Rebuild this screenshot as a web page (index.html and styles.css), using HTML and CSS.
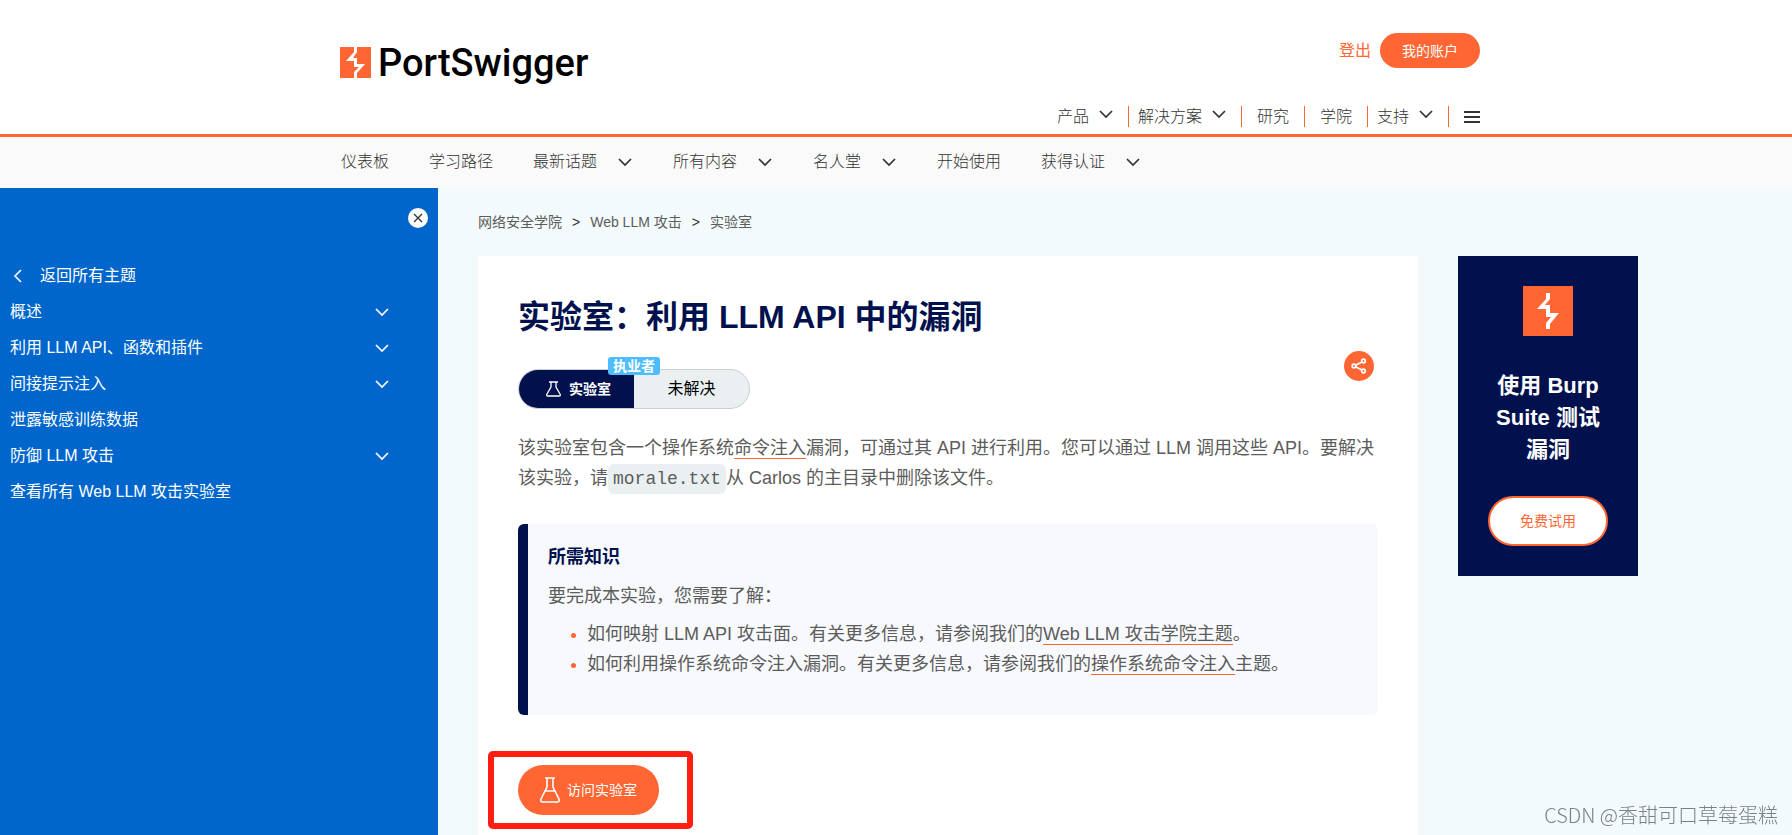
FILE: index.html
```html
<!DOCTYPE html>
<html lang="zh-CN">
<head>
    <meta charset="UTF-8">
    <meta name="viewport" content="width=device-width, initial-scale=1.0">
    <title>实验室：利用 LLM API 中的漏洞</title>
    <link rel="stylesheet" href="styles.css">
</head>
<body>
    <!-- shared icons -->
    <svg class="sprite" width="0" height="0">
        <symbol id="chevron" viewBox="0 0 16 16">
            <path d="M2 5l6 6 6-6" fill="none" stroke="currentColor" stroke-width="1.7"/>
        </symbol>
        <symbol id="flask" viewBox="0 0 20 26">
            <path d="M5 1h10M7 1v9L1 22q-1 3 2 3h14q3 0 2-3L13 10V1M5 14h10" fill="none" stroke="currentColor" stroke-width="1.6"/>
        </symbol>
        <symbol id="flask-wide" viewBox="0 0 15 16">
            <path d="M3 1h9M5 1v5L1 13q-1 2 1 2h11q2 0 1-2L10 6V1" fill="none" stroke="currentColor" stroke-width="1.3"/>
        </symbol>
    </svg>

    <header class="header">
        <div class="wrap header-inner">
            <a class="logo" href="#">
                <svg class="logo-mark" viewBox="0 0 31 31">
                    <rect width="31" height="31" fill="#ff6633"/>
                    <path d="M14 0h3v5l-4 6h4v6h8l-8 9v5h-3v-6l5-5h-5v-6H6l8-9z" fill="#fff"/>
                </svg>
                <span>PortSwigger</span>
            </a>
            <div class="header-right">
                <div class="account">
                    <a class="logout" href="#">登出</a>
                    <a class="btn btn-account" href="#">我的账户</a>
                </div>
                <nav class="main-nav">
                    <a href="#">产品 <svg class="icon"><use href="#chevron"/></svg></a>
                    <a href="#">解决方案 <svg class="icon"><use href="#chevron"/></svg></a>
                    <a class="plain" href="#">研究</a>
                    <a class="plain" href="#">学院</a>
                    <a href="#">支持 <svg class="icon"><use href="#chevron"/></svg></a>
                    <button class="burger" aria-label="菜单"><span></span><span></span><span></span></button>
                </nav>
            </div>
        </div>
    </header>

    <nav class="sub-nav">
        <div class="wrap sub-nav-inner">
            <a href="#">仪表板</a>
            <a href="#">学习路径</a>
            <a href="#">最新话题 <svg class="icon"><use href="#chevron"/></svg></a>
            <a href="#">所有内容 <svg class="icon"><use href="#chevron"/></svg></a>
            <a href="#">名人堂 <svg class="icon"><use href="#chevron"/></svg></a>
            <a href="#">开始使用</a>
            <a href="#">获得认证 <svg class="icon"><use href="#chevron"/></svg></a>
        </div>
    </nav>

    <div class="page">
        <aside class="sidebar">
            <button class="close" aria-label="关闭">
                <svg viewBox="0 0 20 20"><path d="M6 6l8 8M14 6l-8 8" stroke="#333332" stroke-width="1.3"/></svg>
            </button>
            <a class="back" href="#"><svg class="icon"><use href="#chevron"/></svg> 返回所有主题</a>
            <ul class="topics">
                <li><a href="#">概述</a><svg class="icon"><use href="#chevron"/></svg></li>
                <li><a href="#">利用 LLM API、函数和插件</a><svg class="icon"><use href="#chevron"/></svg></li>
                <li><a href="#">间接提示注入</a><svg class="icon"><use href="#chevron"/></svg></li>
                <li><a href="#">泄露敏感训练数据</a></li>
                <li><a href="#">防御 LLM 攻击</a><svg class="icon"><use href="#chevron"/></svg></li>
                <li><a href="#">查看所有 Web LLM 攻击实验室</a></li>
            </ul>
        </aside>

        <main class="main">
            <div class="breadcrumb">
                <a href="#">网络安全学院</a>
                <span>&gt;</span>
                <a href="#">Web LLM 攻击</a>
                <span>&gt;</span>
                <a href="#">实验室</a>
            </div>

            <div class="columns">
                <article class="card">
                    <h1>实验室：利用 LLM API 中的漏洞</h1>

                    <div class="lab-row">
                        <div class="status">
                            <span class="status-lab"><svg class="flask-small"><use href="#flask-wide"/></svg>实验室</span>
                            <span class="status-state">未解决</span>
                            <span class="level">执业者</span>
                        </div>
                        <button class="share" aria-label="分享">
                            <svg viewBox="0 0 30 30" fill="none" stroke="#fff" stroke-width="1.7">
                                <path d="M18 11l-6 3M12 16l6 3"/>
                                <circle cx="19.5" cy="10" r="1.8"/>
                                <circle cx="10" cy="15" r="1.8"/>
                                <circle cx="19.5" cy="20" r="1.8"/>
                            </svg>
                        </button>
                    </div>

                    <p class="intro">该实验室包含一个操作系统<a href="#">命令注入</a>漏洞，可通过其 API 进行利用。您可以通过 LLM 调用这些 API。要解决该实验，请<code>morale.txt</code>从 Carlos 的主目录中删除该文件。</p>

                    <section class="knowledge">
                        <h2>所需知识</h2>
                        <p>要完成本实验，您需要了解：</p>
                        <ul>
                            <li>如何映射 LLM API 攻击面。有关更多信息，请参阅我们的<a href="#">Web LLM 攻击学院主题</a>。</li>
                            <li>如何利用操作系统命令注入漏洞。有关更多信息，请参阅我们的<a href="#">操作系统命令注入</a>主题。</li>
                        </ul>
                    </section>

                    <div class="launch">
                        <a class="btn btn-launch" href="#"><svg class="flask-big"><use href="#flask"/></svg>访问实验室</a>
                    </div>
                </article>

                <aside class="promo">
                    <svg class="promo-mark" viewBox="0 0 50 50">
                        <rect width="50" height="50" fill="#ff6633"/>
                        <path d="M23 7h4v6l-5 6h5v8h9l-9 11v5h-4v-6l5-6h-5v-8h-9l9-10z" fill="#fff"/>
                    </svg>
                    <p>使用 Burp Suite 测试漏洞</p>
                    <a class="btn btn-trial" href="#">免费试用</a>
                </aside>
            </div>
        </main>
    </div>

    <div class="watermark">CSDN @香甜可口草莓蛋糕</div>
</body>
</html>
```
FILE: styles.css
```css
* {
    box-sizing: border-box;
}
body {
    margin: 0;
    font-family: "Liberation Sans", "Noto Sans CJK SC", sans-serif;
    font-size: 16px;
    line-height: 24px;
    color: #333332;
    background: #f2fafc;
    overflow-x: hidden;
}
a {
    color: inherit;
    text-decoration: none;
}
button {
    border: 0;
    padding: 0;
    cursor: pointer;
}
ul {
    list-style: none;
    margin: 0;
    padding: 0;
}
svg {
    flex: none;
}
.sprite {
    position: absolute;
}
.icon {
    width: 16px;
    height: 16px;
}
.wrap {
    max-width: 1168px;
    margin: 0 auto;
    padding-left: 28px;
}
.btn {
    display: flex;
    align-items: center;
    justify-content: center;
    font-size: 14px;
    color: #fff;
    background: #ff6633;
    border-radius: 25px;
}

/* header */
.header {
    background: #fff;
    border-bottom: 3px solid #ff6633;
}
.header-inner {
    display: flex;
    justify-content: space-between;
    height: 134px;
}
.logo {
    display: flex;
    align-items: center;
    gap: 7px;
    height: 125px;
    font-family: Roboto, sans-serif;
    font-size: 38px;
    font-weight: 500;
    color: #000;
}
.logo-mark {
    width: 31px;
    height: 31px;
}
.header-right {
    display: flex;
    flex-direction: column;
    justify-content: space-between;
    padding: 33px 0 7px;
}
.account {
    display: flex;
    align-items: center;
    justify-content: flex-end;
    gap: 9px;
}
.logout {
    color: #ff6633;
}
.btn-account {
    width: 100px;
    height: 35px;
}
.main-nav {
    display: flex;
    align-items: center;
}
.main-nav, .sub-nav {
    font-weight: 300;
}
.main-nav a {
    display: flex;
    align-items: center;
    gap: 9px;
    height: 21px;
    padding: 0 14px 0 9px;
    border-right: 1px solid #ff6633;
}
.main-nav .icon {
    margin-bottom: 6px;
}
.main-nav .plain {
    padding: 0 15px;
}
.burger {
    display: flex;
    flex-direction: column;
    gap: 3px;
    width: 16px;
    margin-left: 15px;
    background: none;
}
.burger span {
    width: 16px;
    height: 2px;
    background: #333332;
}
.sub-nav {
    background: #fafafa;
}
.sub-nav-inner {
    display: flex;
    align-items: center;
    gap: 40px;
    height: 51px;
    padding: 0 0 2px 29px;
}
.sub-nav a {
    display: flex;
    align-items: center;
    gap: 20px;
}

/* sidebar */
.page {
    display: flex;
    height: calc(100vh - 188px);
    overflow: hidden;
}
.sidebar {
    flex: none;
    width: 438px;
    padding: 20px 10px;
    color: #fff;
    background: #0066cc;
}
.close {
    display: block;
    width: 20px;
    height: 20px;
    margin-left: auto;
    border-radius: 50%;
    background: #fff;
}
.close svg {
    display: block;
}
.back {
    display: flex;
    align-items: center;
    gap: 14px;
    height: 36px;
    margin-top: 30px;
}
.back .icon {
    transform: rotate(90deg);
}
.topics li {
    display: flex;
    align-items: center;
    justify-content: space-between;
    height: 36px;
    padding-right: 38px;
}

/* content */
.main {
    flex: 1;
    padding: 22px 40px 0;
}
.breadcrumb {
    display: flex;
    gap: 10px;
    font-size: 14px;
    color: #5c5c5b;
}
.breadcrumb span {
    color: #333332;
}
.columns {
    display: grid;
    grid-template-columns: minmax(0, 940px) 180px;
    gap: 40px;
    align-items: start;
    margin-top: 22px;
}
.card {
    padding: 40px 40px 20px;
    background: #fff;
}
h1 {
    margin: 0;
    font-size: 32px;
    line-height: 42px;
    color: #00114e;
}
.lab-row {
    display: flex;
    justify-content: space-between;
    margin-top: 13px;
}
.status {
    position: relative;
    display: flex;
    width: 232px;
    height: 40px;
    margin-top: 18px;
    border: 1px solid #c8d0d2;
    border-radius: 20px;
    background: #eaf0f2;
}
.status-lab {
    display: flex;
    align-items: center;
    justify-content: center;
    gap: 8px;
    width: 115px;
    padding-left: 4px;
    font-size: 14px;
    font-weight: bold;
    color: #fff;
    background: #00114e;
    border-radius: 19px 0 0 19px;
}
.flask-small {
    width: 15px;
    height: 16px;
}
.status-state {
    flex: 1;
    display: flex;
    align-items: center;
    justify-content: center;
    color: #000;
}
.level {
    position: absolute;
    left: 89px;
    top: -13px;
    padding: 0 5px;
    font-size: 14px;
    line-height: 18px;
    font-weight: bold;
    color: #fff;
    background: #4dbdff;
    border-radius: 3px;
}
.share {
    width: 30px;
    height: 30px;
    margin: 0 4px;
    border-radius: 50%;
    background: #ff6633;
}
.share svg {
    display: block;
}
.intro, .knowledge {
    font-size: 18px;
    line-height: 30px;
    color: #5c5c5b;
}
.intro {
    margin: 24px 0 30px;
}
.intro a, .knowledge a {
    border-bottom: 1px solid #ff6633;
}
code {
    padding: 5px;
    font-family: "Liberation Mono", monospace;
    font-size: 18px;
    background: #eaf0f2;
    border-radius: 6px;
}
.knowledge {
    padding: 18px 20px 36px;
    border-left: 10px solid #00114e;
    border-radius: 6px;
    background: #f7f9fd;
}
.knowledge h2 {
    margin: 0;
    font-size: 18px;
    line-height: 30px;
    color: #00114e;
}
.knowledge p {
    margin: 9px 0 8px;
}
.knowledge li {
    position: relative;
    padding-left: 39px;
}
.knowledge li::before {
    content: "";
    position: absolute;
    left: 23px;
    top: 14px;
    width: 5px;
    height: 5px;
    border-radius: 50%;
    background: #ff6633;
}

/* highlighted launch button */
.launch {
    width: 205px;
    margin: 36px 0 0 -30px;
    padding: 8px 24px;
    border: 6px solid #ff1e10;
    border-radius: 5px;
}
.btn-launch {
    gap: 7px;
    width: 141px;
    height: 50px;
}
.flask-big {
    width: 20px;
    height: 26px;
}

/* promo */
.promo {
    display: flex;
    flex-direction: column;
    align-items: center;
    padding: 30px;
    background: #00114e;
}
.promo-mark {
    width: 50px;
    height: 50px;
}
.promo p {
    margin: 34px 0 30px;
    font-size: 22px;
    line-height: 32px;
    font-weight: bold;
    text-align: center;
    color: #fff;
}
.btn-trial {
    width: 120px;
    height: 50px;
    color: #ff6633;
    background: #fff;
    border: 2px solid #ff6633;
}
.watermark {
    position: fixed;
    right: 14px;
    bottom: 6px;
    font-family: "Noto Sans CJK SC", sans-serif;
    font-size: 20px;
    font-weight: 300;
    line-height: 28px;
    color: #7c8082;
}
```
